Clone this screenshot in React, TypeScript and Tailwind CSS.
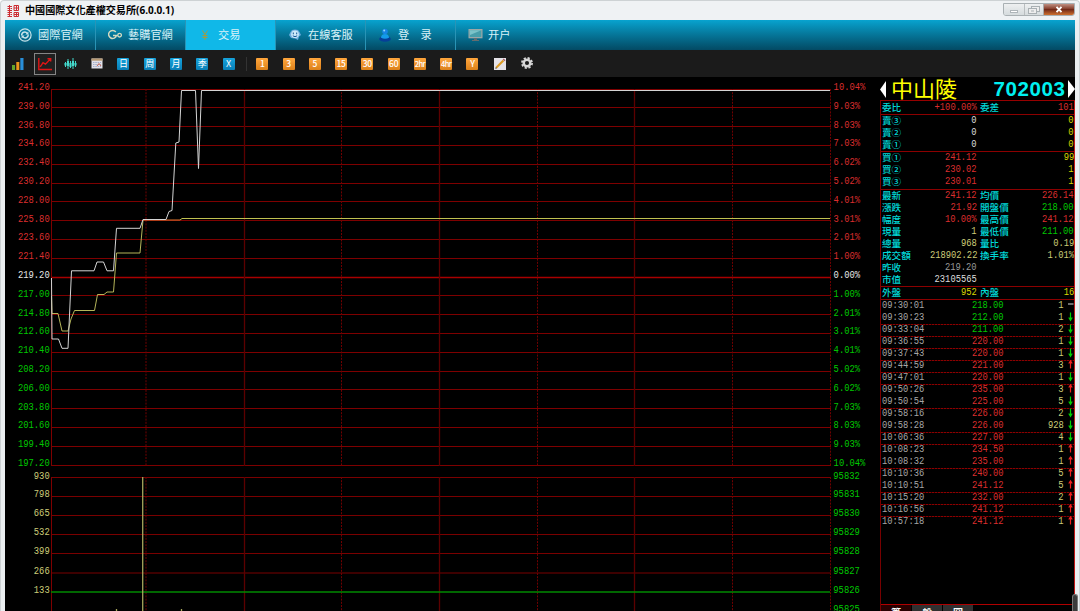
import React from "react";

const MONO = "font-['Liberation_Mono','Noto_Sans_CJK_TC',monospace]";
const RED = "#dc2e2e";
const GREEN = "#00c800";
const KHAKI = "#cdcd78";

const steps = Array.from({ length: 21 }, (_, i) => i);
const volumeLines = [477.5, 496.5, 515.5, 534.5, 553.5, 573];
const volumeLabels = ["930", "798", "665", "532", "399", "266", "133"];
const volumeLabelY = [475.3, 494, 513, 532, 551, 570.3, 589.3, 608.5];
const columns = [
  { x: 146, dotted: true },
  { x: 244.5, dotted: false },
  { x: 341.5, dotted: true },
  { x: 439.5, dotted: false },
  { x: 537.5, dotted: true },
  { x: 634.5, dotted: false },
  { x: 732.5, dotted: true },
  { x: 830.5, dotted: true },
];

function Label({ x, y, text, color, end }: { x: number; y: number; text: string; color: string; end?: boolean }) {
  return (
    <text
      x={end ? x - text.length * 5.3 : x}
      y={y + 3.2}
      fill={color}
      textLength={text.length * 5.3}
      lengthAdjust="spacingAndGlyphs"
      className={`${MONO} text-[11px]`}
    >
      {text}
    </text>
  );
}

function Chart() {
  return (
    <svg className="block h-[534px] w-[873px]" viewBox="5 77 873 534">
      {steps.map((i) => (
        <line key={i} x1={51} x2={831} y1={Math.floor(89 + i * 18.8) + 0.5} y2={Math.floor(89 + i * 18.8) + 0.5} stroke={i === 10 ? "#a80000" : "#7e0000"} strokeWidth={i === 10 ? 1.6 : 1} />
      ))}
      {volumeLines.map((y) => (
        <line key={y} x1={51} x2={831} y1={y} y2={y} stroke="#7a0000" />
      ))}
      <path d="M51.5 89V466M51.5 477V611" stroke="#7e0000" />
      {columns.map((c) => (
        <path key={c.x} d={`M${c.x} 89V466M${c.x} 477V611`} stroke={c.dotted ? "#700000" : "#5c0000"} strokeWidth={c.dotted ? 1 : 1.3} strokeDasharray={c.dotted ? "2 1.2" : undefined} />
      ))}
      <line x1={51} x2={830} y1={592} y2={592} stroke="#008a00" strokeWidth={1.3} />
      <path d="M142.7 477V611M116.5 609V611M181.5 609V611" stroke="#a6a65a" strokeWidth={1.3} />
      <path d="M51.5 296L52 313.5H58L62 331H68L71 319L74.5 310.5H94.5L97.5 294.5H104L107 292H113.5L116.5 253H140L143 220" fill="none" stroke="#b5b55a" />
      <path d="M143 220H180" stroke="#e07830" />
      <path d="M180 220L182 218.5H830" fill="none" stroke="#c0c050" />
      <path d="M51.5 278L52 339H58.5L62 348.3H68L71.5 270.8H94L97 262H103.5L107 270.8H113.5L116.5 228.3H140L143 219.5H166L169 211.5L172 210.5L175.8 143L179 142L181.5 90.5H195.5L198.5 168.5L201.5 90.5H830" fill="none" stroke="#d4d4d4" />
      {steps.map((i) => {
        const color = i < 10 ? RED : i === 10 ? "#e8e8e8" : GREEN;
        const rate = ["0.00", "1.00", "2.01", "3.01", "4.01", "5.02", "6.02", "7.03", "8.03", "9.03", "10.04"][Math.abs(10 - i)];
        const y = 86.8 + i * 18.8;
        return (
          <g key={i}>
            <Label x={49.7} y={y} text={(241.2 - i * 2.2).toFixed(2)} color={color} end />
            <Label x={833.6} y={y} text={`${rate}%`} color={color} />
          </g>
        );
      })}
      {volumeLabels.map((t, i) => (
        <Label key={t} x={49.7} y={volumeLabelY[i]} text={t} color={KHAKI} end />
      ))}
      {volumeLabelY.map((y, i) => (
        <Label key={y} x={833.3} y={y} text={String(95832 - i)} color={GREEN} />
      ))}
    </svg>
  );
}

function Num({ children, color, end }: { children: React.ReactNode; color: string; end?: boolean }) {
  return (
    <span
      className={`${MONO} block scale-x-[.8] text-[11px] leading-3 whitespace-nowrap ${end ? "origin-right text-right" : "origin-left"} ${color}`}
    >
      {children}
    </span>
  );
}

const R = "text-[#dc2e2e]";
const G = "text-[#00c800]";
const K = "text-[#cdcd78]";
const Y = "text-[#d8d800]";
const W = "text-[#dddddd]";
const A = "text-[#9a9a9a]";

type Row = [string, string, string, string?, string?, string?];

const nameStyle = "text-[9.6px] font-medium whitespace-nowrap text-[#00d8d8]";

function Rows({ rows }: { rows: Row[] }) {
  return (
    <>
      {rows.map((r) => (
        <div key={r[0]} className="grid h-3 grid-cols-[30px_65px_3px_30px_minmax(0,1fr)] pl-px leading-3">
          <span className={nameStyle}>{r[0]}</span>
          <div className="flex justify-end"><Num color={r[2]} end>{r[1]}</Num></div>
          <span />
          <span className={nameStyle}>{r[3]}</span>
          <div className="flex justify-end">{r[4] && <Num color={r[5] ?? K} end>{r[4]}</Num>}</div>
        </div>
      ))}
    </>
  );
}

function Group({ rows, className }: { rows: Row[]; className: string }) {
  return (
    <div className={`border-t border-[#8c0000] ${className}`}>
      <div className="-mt-px"><Rows rows={rows} /></div>
    </div>
  );
}

const asks: Row[] = [
  ["賣③", "0", W, "", "0", Y],
  ["賣②", "0", W, "", "0", Y],
  ["賣①", "0", W, "", "0", Y],
];
const bids: Row[] = [
  ["買①", "241.12", R, "", "99", Y],
  ["買②", "230.02", R, "", "1", Y],
  ["買③", "230.01", R, "", "1", Y],
];
const stats: Row[] = [
  ["最新", "241.12", R, "均價", "226.14", R],
  ["漲跌", "21.92", R, "開盤價", "218.00", G],
  ["幅度", "10.00%", R, "最高價", "241.12", R],
  ["現量", "1", K, "最低價", "211.00", G],
  ["總量", "968", K, "量比", "0.19", K],
  ["成交額", "218902.22", K, "換手率", "1.01%", K],
  ["昨收", "219.20", A],
  ["市值", "23105565", W],
];

const ticks: [string, string, string, string][] = [
  ["09:30:01", "218.00", "1", "-"],
  ["09:30:23", "212.00", "1", "d"],
  ["09:33:04", "211.00", "2", "d"],
  ["09:36:55", "220.00", "1", "d"],
  ["09:37:43", "220.00", "1", "d"],
  ["09:44:59", "221.00", "3", "u"],
  ["09:47:01", "220.00", "1", "d"],
  ["09:50:26", "235.00", "3", "u"],
  ["09:50:54", "225.00", "5", "d"],
  ["09:58:16", "226.00", "2", "d"],
  ["09:58:28", "226.00", "928", "d"],
  ["10:06:36", "227.00", "4", "d"],
  ["10:08:23", "234.50", "1", "u"],
  ["10:08:32", "235.00", "1", "u"],
  ["10:10:36", "240.00", "5", "u"],
  ["10:10:51", "241.12", "5", "u"],
  ["10:15:20", "232.00", "2", "u"],
  ["10:16:56", "241.12", "1", "u"],
  ["10:57:18", "241.12", "1", "u"],
];

function Mark({ kind }: { kind: string }) {
  return (
    <svg className="-mt-px h-3 w-2" viewBox="0 0 8 12">
      {kind === "-" && <path d="M1 5H6.5" stroke="#888" strokeWidth="1.6" />}
      {kind === "d" && <path d="M3.5 1.5V9.5M1.8 6.5L3.5 9.3L5.2 6.5" fill="none" stroke="#00d000" strokeWidth="1.2" />}
      {kind === "u" && <path d="M3.5 1.5V9.5M1.8 4.5L3.5 1.8L5.2 4.5" fill="none" stroke="#f02020" strokeWidth="1.2" />}
    </svg>
  );
}

function Quote() {
  return (
    <aside className="flex w-[195px] flex-col text-white">
      <header className="flex h-[23px] items-center pt-px">
        <svg className="h-[17px] w-[6px]" viewBox="0 0 6 17"><path d="M6 0V17L0 8.5Z" fill="#fff" /></svg>
        <span className="-mt-[4px] ml-[5px] text-[22px] leading-[19px] text-[#ffff00]">中山陵</span>
        <span className="ml-auto font-['Liberation_Sans',sans-serif] text-[20.5px] leading-[22px] font-bold tracking-[.6px] text-[#00f0f0]">702003</span>
        <svg className="ml-[2.5px] h-[18px] w-[7px]" viewBox="0 0 7 18"><path d="M0 0V18L7 9Z" fill="#fff" /></svg>
      </header>
      <div className="flex flex-1 flex-col border-t border-r-[1.5px] border-l border-t-[#960000] border-r-[#c01818] border-l-[#780000]">
        <div className="h-[13px]"><Rows rows={[["委比", "+100.00%", R, "委差", "101", R]]} /></div>
        <Group className="h-[37px]" rows={asks} />
        <Group className="h-[38px]" rows={bids} />
        <Group className="h-[97px]" rows={stats} />
        <Group className="h-[13px]" rows={[["外盤", "952", Y, "內盤", "16", Y]]} />
        <div className="border-t border-[#8c0000]">
          {ticks.map(([time, price, amount, kind], i) => {
            const divided = i > 1 && time.slice(0, 5) !== ticks[i - 1][0].slice(0, 5);
            return (
              <div key={time} className="relative h-3">
                {divided && (
                  <div className="absolute inset-x-0 top-0 h-px bg-[repeating-linear-gradient(to_right,#8c0000_0_2px,#380000_2px_3px)]" />
                )}
                <div className="relative grid grid-cols-[62px_60px_60px_3px_8px] pl-px">
                  <div className="-mt-px"><Num color="text-[#a6a6a6]">{time}</Num></div>
                  <div className="-mt-px flex justify-end"><Num color={i < 3 ? G : R} end>{price}</Num></div>
                  <div className="-mt-px flex justify-end"><Num color={K} end>{amount}</Num></div>
                  <span />
                  <Mark kind={kind} />
                </div>
              </div>
            );
          })}
        </div>
        <div className="mt-auto flex h-[7px] gap-px overflow-hidden border-t border-[#b00000] text-[10px] leading-[16px] font-bold text-white">
          <span className="w-[30px] bg-[#280000] text-center">筆</span>
          <span className="w-[30px] bg-[#303030] text-center">盤</span>
          <span className="w-[30px] bg-[#303030] text-center">圖</span>
        </div>
      </div>
    </aside>
  );
}

const navIcons = [
  <svg key="a" className="size-3.5" viewBox="0 0 14 14" fill="none" stroke="#c9e4ea">
    <circle cx="7" cy="7" r="6.1" strokeWidth="1.2" />
    <path d="M3.7 7.4C3.6 4.2 7.4 3 9.2 5.4M10.3 6.6C10.4 9.8 6.6 11 4.8 8.6" strokeWidth="1.5" />
    <path d="M10.4 3.4V6.4H7.4ZM3.6 10.6V7.6H6.6Z" fill="#c9e4ea" stroke="none" />
  </svg>,
  <svg key="b" className="h-3 w-3.5" viewBox="0 0 14 12" fill="none" stroke="#d3d9c0">
    <path d="M7.8 3A4 4 0 1 0 8.5 6.4H5M8.5 6.4H9.8" strokeWidth="1.5" />
    <circle cx="11.6" cy="6.2" r="1.8" strokeWidth="1.3" />
  </svg>,
  <svg key="c" className="h-3 w-3.5" viewBox="0 0 14 12" fill="none" stroke="#a89a3e" strokeWidth="1">
    <path d="M4.5 1.5L7 5.5L9.5 1.5M7 5.5V11M4.5 6.5H9.5M4.5 8.5H9.5" />
  </svg>,
  <svg key="d" className="size-3.5" viewBox="0 0 14 14">
    <path d="M2.5 4L4 2L7 1.5L10 2L11.5 4L13 7L11 8.5L10 12L7 10.5L3 10L1 7Z" fill="#6eaee0" />
    <circle cx="7" cy="6.2" r="3.8" fill="#cdeafa" />
    <path d="M5.3 4.5V6.3M8.7 4.5V6.3M4.8 7.8Q7 9.5 9.2 7.8" fill="none" stroke="#125597" />
  </svg>,
  <svg key="e" className="size-3.5" viewBox="0 0 14 14">
    <ellipse cx="7" cy="11" rx="5.8" ry="2.8" fill="#063f98" />
    <path d="M3 9.7C3 7 5 6 7 6S11 7 11 9.7Q7 11.7 3 9.7Z" fill="#149bea" />
    <circle cx="7" cy="3.5" r="2.8" fill="#1685e5" />
    <circle cx="6.2" cy="2.4" r="1" fill="#91d7ff" />
  </svg>,
  <svg key="f" className="h-3.5 w-[15px]" viewBox="0 0 15 14">
    <rect x=".5" y="1" width="14" height="9.3" fill="#9da7a7" />
    <rect x="1.7" y="2.2" width="11.6" height="6.8" fill="#489eaa" />
    <path d="M1.7 2.2H13.3L2 7Z" fill="#7bc3c9" />
    <path d="M6 10.3H9V12H11V13H4V12H6Z" fill="#656c6e" />
  </svg>,
];
const navItems = ["國際官網", "藝購官網", "交易", "在線客服", "登　录", "开户"];

const toolCell = "flex w-[26.28px] shrink-0 items-center justify-center";

function Tile({ text, orange }: { text: string; orange?: boolean }) {
  return (
    <span className={toolCell}>
      <span
        className={`flex size-3 items-center justify-center rounded-[1px] leading-none text-white ${orange ? "bg-linear-to-b from-[#ffa63c] to-[#dc8119] font-medium" : "bg-linear-to-b from-[#16a3dc] to-[#087fb7]"} ${text.length > 2 ? "text-[7.5px] tracking-[-.6px]" : orange ? "text-[8.5px] tracking-[-.3px]" : "text-[9px]"}`}
      >
        {text}
      </span>
    </span>
  );
}

function Toolbar() {
  return (
    <div className="flex h-[27px] shrink-0 bg-[#1b1b1b] pl-[.3px]">
      <span className={toolCell}>
        <svg className="h-3 w-3" viewBox="0 0 12 12">
          <rect x="0" y="7" width="3" height="5" fill="#65a62b" />
          <rect x="4.3" y="4" width="3" height="8" fill="#ed971b" />
          <rect x="8.3" y="0" width="3.2" height="12" fill="#298fd9" />
        </svg>
      </span>
      <span className={toolCell}>
        <span className="flex size-[22px] items-center justify-center border border-[#858585] bg-[#202020]">
          <svg className="h-[14px] w-[14px]" viewBox="0 0 14 14" fill="none" stroke="#e01515" strokeWidth="1.4">
            <path d="M.8 1V12.5H14M2.2 9.8L5 5.7L7.5 7.2L12.5 1.8M9.5 1.8H12.7V4.5" />
          </svg>
        </span>
      </span>
      <span className={toolCell}>
        <svg className="h-3 w-[13px]" viewBox="0 0 13 12" stroke="#43d9cc">
          <path d="M1.5 4V9M4 1V11M6.5 3V10M9 0V11M11.5 3V9" />
          <path d="M1.5 5V7.5M4 3V8M6.5 5V9M9 3V8M11.5 5V7.5" strokeWidth="2.1" />
        </svg>
      </span>
      <span className={toolCell}>
        <svg className="h-[11px] w-3" viewBox="0 0 12 11">
          <rect x=".5" y=".5" width="11" height="10" fill="#e1e1e8" />
          <rect x=".5" y=".5" width="11" height="2.2" fill="#b79973" />
          <path d="M2 4.5H10M2 6.5H10M2 8.5H10" stroke="#a3aecb" strokeDasharray="1.5 .8" />
          <path d="M6 8L8 5.5L10 8" fill="none" stroke="#cb6855" />
        </svg>
      </span>
      {["日", "周", "月", "季", "X"].map((t) => <Tile key={t} text={t} />)}
      <span className="flex w-[7.5px] shrink-0 items-center pl-[4px]"><span className="h-3.5 w-px bg-[#333]" /></span>
      {["1", "3", "5", "15", "30", "60", "2hr", "4hr", "Y"].map((t) => <Tile key={t} text={t} orange />)}
      <span className={`${toolCell} ml-px`}>
        <svg className="size-3" viewBox="0 0 12 12">
          <rect width="12" height="12" fill="#e5e3e8" />
          <path d="M2.2 9.8L9.4 2.5" stroke="#db9b24" strokeWidth="2" />
          <path d="M1.3 10.8L3 10.3L1.9 9.1Z" fill="#333" />
          <path d="M9.2 1L11 2.8" stroke="#ad6370" strokeWidth="1.5" />
        </svg>
      </span>
      <span className={`${toolCell} pb-[2px] pl-[2px]`}>
        <svg className="size-3" viewBox="0 0 12 12" fill="none" stroke="#d8d8d8">
          <circle cx="6" cy="6" r="3.3" strokeWidth="2.5" />
          <circle cx="6" cy="6" r="5.1" strokeWidth="1.7" strokeDasharray="2.2 1.805" />
        </svg>
      </span>
    </div>
  );
}

export default function App() {
  return (
    <div className="relative flex h-[611px] w-[1080px] flex-col overflow-hidden rounded-t-[4px] border-x border-t border-[#cdd2d4] bg-[#eff2f4] font-['Noto_Sans_CJK_TC','Noto_Sans',sans-serif]">
      <div className="flex h-[19px] shrink-0 items-center pr-[4px] pl-[6px]">
        <svg className="size-3" viewBox="0 0 12 12" fill="none" stroke="#cc2c32" strokeWidth="1">
          <path d="M.5 1.5H5M2.5 0V5M.5 3.5H2M3.5 3.5H5M.5 5.5H5M7 .5H11.5V5.5H7ZM7 3H11.5M9.5 .5V5.5M.5 7.5H5M2.5 6V12M.5 9.5H2M3.5 9.5H5M7 7.5H11.5V11.5H7ZM7 9.5H11.5M9.5 7.5V11.5M.5 11.5H5" />
        </svg>
        <h1 className="ml-[6px] text-[10.1px] leading-none font-bold whitespace-nowrap text-black">
          中國國際文化產權交易所<span className="font-['Noto_Sans',sans-serif] text-[10px]">(6.0.0.1)</span>
        </h1>
        <div className="mt-[2px] ml-auto flex h-[13px] self-start overflow-hidden rounded-b-[3px] border border-[#a9b0b3]">
          <span className="flex w-[21px] items-center justify-center border-r border-[#b9bec0] bg-linear-to-b from-[#eef0f1] to-[#d5dbdd]">
            <span className="mt-1 h-[3px] w-2 border border-[#aeb5b9] bg-white" />
          </span>
          <span className="flex w-[19px] items-center justify-center border-r border-[#a9a9a9] bg-linear-to-b from-[#eef0f1] to-[#d5dbdd]">
            <svg className="h-2 w-3" viewBox="0 0 12 8" fill="#eee" stroke="#a9b0b3"><rect x="3.5" y=".5" width="8" height="5" /><rect x=".5" y="2.5" width="8" height="5" /><path d="M3 5H6" /></svg>
          </span>
          <span className="flex w-[30px] items-center justify-center bg-[linear-gradient(to_bottom,#bf8f82_0%,#8c4634_40%,#722a19_50%,#ce702e_100%)]">
            <svg className="h-[7px] w-2" viewBox="0 0 8 7"><path d="M1.5 .8L6.5 6.2M6.5 .8L1.5 6.2" stroke="#fff" strokeWidth="1.9" /></svg>
          </span>
        </div>
      </div>

      <div className="flex min-h-0 flex-1 flex-col border-x-4 border-r-[#ebeff1] border-l-[#ebeff1] bg-black">
        <nav className="flex h-[30px] shrink-0 bg-linear-to-b from-[#08a3cf] to-[#034a64] pl-px">
          {navItems.map((name, i) => (
            <div key={name} className={`flex w-[90px] items-center border-r pb-px pl-[12px] text-[11.2px] leading-none whitespace-nowrap text-[#d9f2f8] ${i === 5 ? "border-transparent" : "border-[#2994b6]"} ${i === 2 ? "bg-[#10b8e8]" : ""}`}>
              <span className="flex w-[20px] shrink-0">{navIcons[i]}</span>
              <span>{name}</span>
            </div>
          ))}
        </nav>
        <Toolbar />
        <main className="flex h-[534px] shrink-0">
          <div className="w-[875px] shrink-0"><Chart /></div>
          <Quote />
        </main>
      </div>
      <div className="absolute right-px bottom-0 h-[17px] w-[6px] rounded-t-[3px] border border-b-0 border-[#777] bg-[#3b3b3b]" />
    </div>
  );
}
